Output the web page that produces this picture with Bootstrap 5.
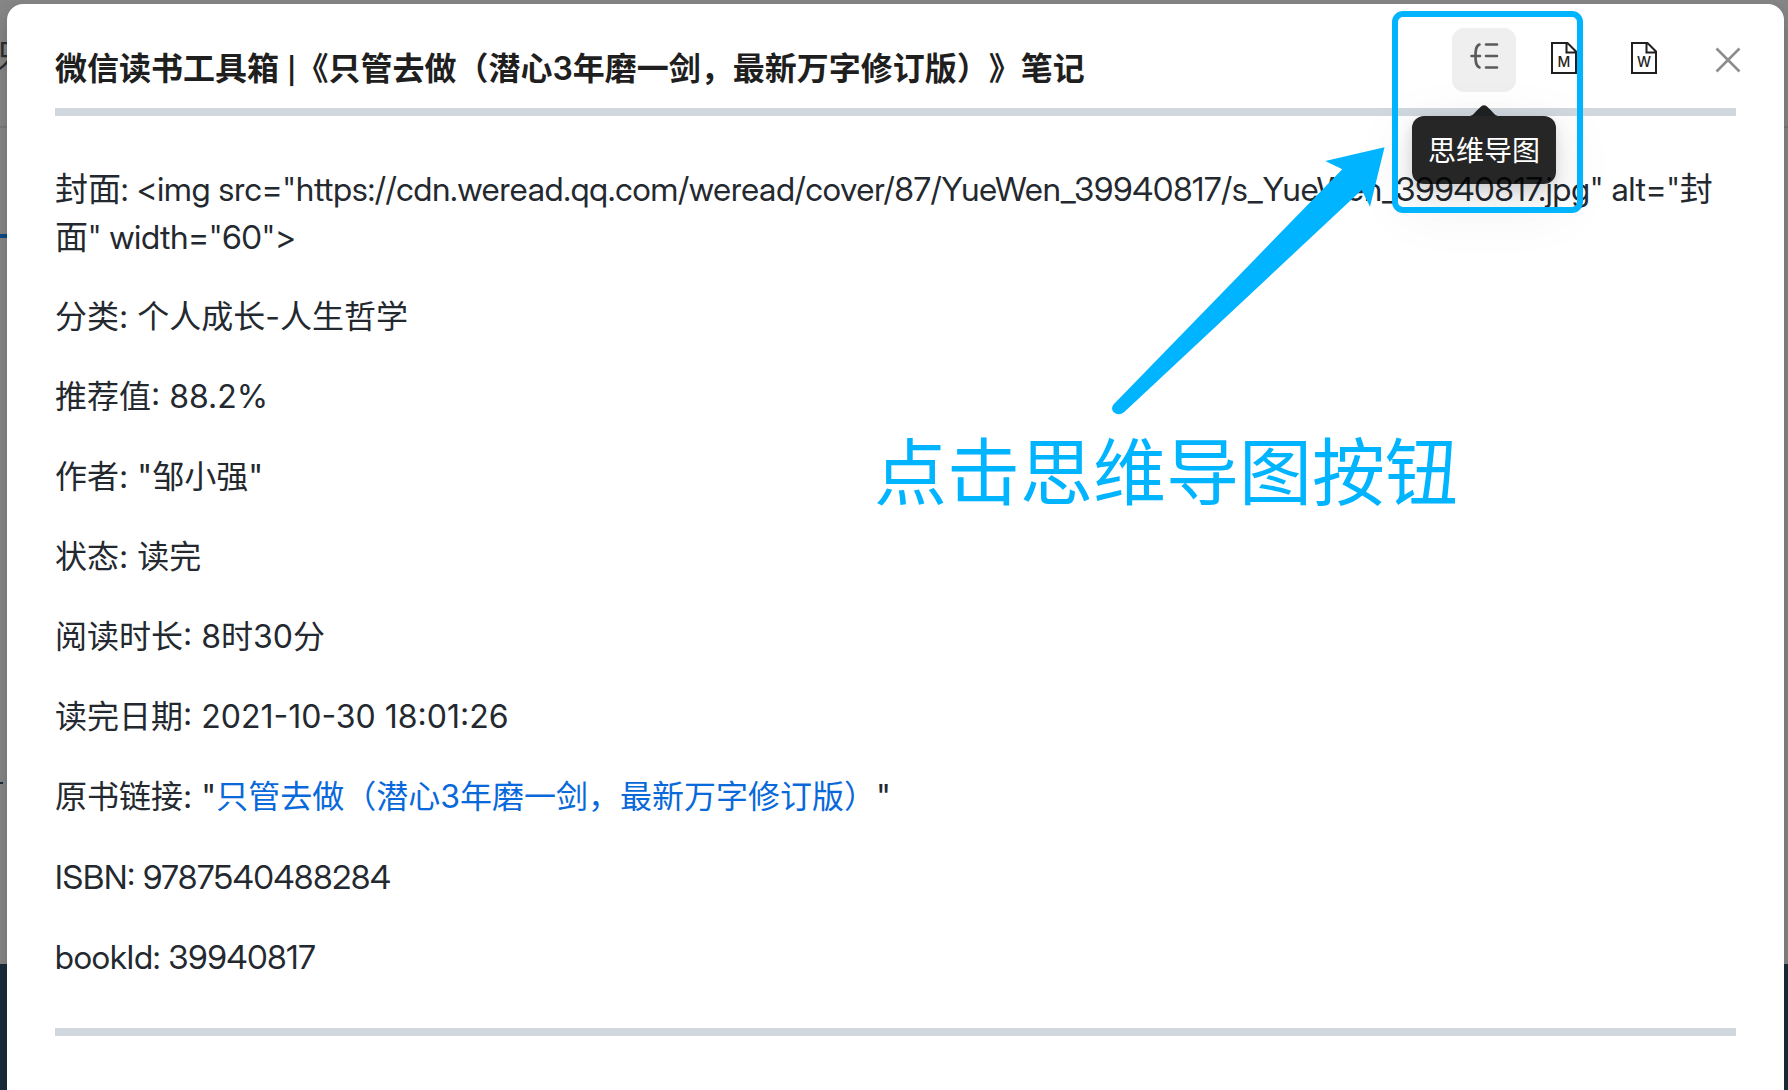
<!DOCTYPE html>
<html lang="zh-CN">
<head>
<meta charset="utf-8">
<meta name="viewport" content="width=device-width, initial-scale=1">
<title>微信读书工具箱</title>
<link href="https://cdn.jsdelivr.net/npm/bootstrap@5.3.0/dist/css/bootstrap.min.css" rel="stylesheet">
<style>
  body { font-family: Inter, "Noto Sans CJK SC", sans-serif; background: #868686; color: #24292f; overflow: hidden; text-spacing-trim: space-all; }
  .backdrop-page { z-index: 0; }
  .page-head { height: 128px; border-bottom: 2px solid #7a7a7a; padding-top: 36px; }
  .page-head span { font-size: 32px; line-height: 40px; color: #2b2d30; margin-left: -4px; }
  .page-tab { width: 50%; height: 110px; border-bottom: 4px solid #0c4a87; }
  .page-main { height: 726px; padding-top: 544px; }
  .page-main div { height: 2px; width: 3px; background: #1a2c39; }
  .page-foot { background: #1a2c39; }
  .note-dialog { z-index: 1; margin: 4px 4px 0 7px; border-radius: 16px 16px 0 0; padding: 24px 48px 48px; min-height: calc(100vh - 4px); box-shadow: 0 12px 32px rgba(0,0,0,.08), 0 6px 12px rgba(0,0,0,.12); }
  .note-title { font-size: 32px; line-height: 48px; font-weight: 600; color: #1f1f1f; padding-top: 17px; }
  .note-title span { font-size: 26px; }
  .note-head { height: 80px; }
  .tool-btn { width: 64px; height: 64px; border-radius: 12px; color: #1f1f1f; background: transparent; padding: 0 0 4px; }
  .tool-btn.is-hover { background: #efefef; color: #5a5a5a; padding-bottom: 8px; }
  .tool-btn text { font: 500 14px Inter, sans-serif; }
  .close-btn { width: 40px; height: 64px; color: #8c8c8c; margin: 0 -12px 0 32px; }
  .note-rule { height: 8px; margin: 0; border: 0; background: #d0d7de; opacity: 1; }
  .note-body { font-size: 32px; line-height: 48px; padding: 49px 0 47px; }
  .note-body p { margin-bottom: 32px; }
  .note-body p:last-child { margin-bottom: 0; }
  .note-body a { color: #0969da; text-decoration: none; }
  .latin { font-size: 33px; font-family: "Inter Display", Inter, "Noto Sans CJK SC", sans-serif; }
  .tip { top: 88px; left: 50%; transform: translateX(-50%); background: rgba(0,0,0,.85); color: #fff; font-size: 28px; line-height: 44px; padding: 13px 16px 11px; border-radius: 12px; white-space: nowrap; z-index: 3; box-shadow: 0 12px 32px rgba(0,0,0,.08), 0 6px 12px rgba(0,0,0,.1), 0 18px 56px 16px rgba(0,0,0,.04); }
  .tip svg { bottom: 100%; left: 50%; margin-left: -14px; }
  .annotation { z-index: 5; pointer-events: none; }
  .mark-frame { left: 1392px; top: 11px; width: 191px; height: 202px; border: 6px solid #00b4ff; border-radius: 11px; }
  .mark-text { left: 874px; top: 425px; font-size: 73px; line-height: 96px; color: #00b4ff; white-space: nowrap; }
  .mark-arrow { left: 1100px; top: 140px; }
</style>
</head>
<body class="position-relative vh-100">
<div class="backdrop-page position-absolute top-0 start-0 w-100 h-100 d-flex flex-column overflow-hidden" aria-hidden="true">
  <div class="page-head"><span>只</span></div>
  <div class="page-tab"></div>
  <div class="page-main"><div></div></div>
  <div class="page-foot flex-grow-1"></div>
</div>
<main class="note-dialog position-relative bg-white" role="dialog" aria-labelledby="noteTitle">
  <header class="note-head d-flex align-items-start">
    <h1 id="noteTitle" class="note-title flex-grow-1 mb-0">微信读书工具箱 <span>|</span>《只管去做（潜心3年磨一剑，最新万字修订版）》笔记</h1>
    <div class="d-flex gap-3">
      <div class="position-relative">
        <button type="button" class="tool-btn is-hover btn border-0 d-flex align-items-center justify-content-center" aria-label="思维导图" aria-describedby="mapTip">
          <svg width="32" height="32" viewBox="0 0 32 32" fill="none" stroke="currentColor" stroke-width="2.600" stroke-linecap="round"><path d="M11.500 4.500C7.500 6 7.500 11 7.500 16s0 10 4 11.500M3.500 16H12M18 4.500h11M18 16h11M18 27.500h11"/></svg>
        </button>
        <div id="mapTip" class="tip position-absolute" role="tooltip">思维导图
          <svg class="position-absolute" width="28" height="11" viewBox="0 0 28 11"><path d="M0 11C4 10 4 8 11 1.500Q14-1 17 1.500C24 8 24 10 28 11Z" fill="#000" fill-opacity=".85"/></svg>
        </div>
      </div>
      <button type="button" class="tool-btn btn border-0 d-flex align-items-center justify-content-center" aria-label="Markdown">
        <svg width="26" height="32" viewBox="0 0 26 32" fill="none" stroke="currentColor" stroke-width="2"><path d="M1 1h15.500L25 9.500V31H1ZM15.500 1v9.500H25"/><text x="13" y="25" text-anchor="middle" fill="currentColor" stroke="none">M</text></svg>
      </button>
      <button type="button" class="tool-btn btn border-0 d-flex align-items-center justify-content-center" aria-label="Word">
        <svg width="26" height="32" viewBox="0 0 26 32" fill="none" stroke="currentColor" stroke-width="2"><path d="M1 1h15.500L25 9.500V31H1ZM15.500 1v9.500H25"/><text x="13" y="25" text-anchor="middle" fill="currentColor" stroke="none">W</text></svg>
      </button>
    </div>
    <button type="button" class="close-btn btn border-0 p-0 d-flex align-items-center justify-content-center" aria-label="关闭">
      <svg width="26" height="26" viewBox="0 0 26 26" fill="none" stroke="currentColor" stroke-width="2.500"><path d="M1.500 1.500l23 23M24.500 1.500l-23 23"/></svg>
    </button>
  </header>
  <hr class="note-rule">
  <article class="note-body">
    <p class="latin">封面: &lt;img src="https://cdn.weread.qq.com/weread/cover/87/YueWen_39940817/s_YueWen_39940817.jpg" alt="封面" width="60"&gt;</p>
    <p>分类: 个人成长-人生哲学</p>
    <p>推荐值: 88.2%</p>
    <p>作者: "邹小强"</p>
    <p>状态: 读完</p>
    <p>阅读时长: 8时30分</p>
    <p>读完日期: 2021-10-30 18:01:26</p>
    <p>原书链接: "<a href="#">只管去做（潜心3年磨一剑，最新万字修订版）</a>"</p>
    <p class="latin">ISBN: 9787540488284</p>
    <p class="latin">bookId: 39940817</p>
  </article>
  <hr class="note-rule">
</main>
<div class="annotation position-absolute top-0 start-0">
  <div class="mark-frame position-absolute"></div>
  <svg class="mark-arrow position-absolute" width="300" height="290" viewBox="1100 140 300 290"><path fill="#00b4ff" d="M1384.500 147.300L1325.300 161L1342.300 169.300L1113.500 404.500Q1110.500 408.500 1113.500 412Q1118.500 416.500 1124 412.300L1361.700 190L1370 206.700Z"/></svg>
  <div class="mark-text position-absolute">点击思维导图按钮</div>
</div>
<script src="https://cdn.jsdelivr.net/npm/bootstrap@5.3.0/dist/js/bootstrap.bundle.min.js"></script>
</body>
</html>
